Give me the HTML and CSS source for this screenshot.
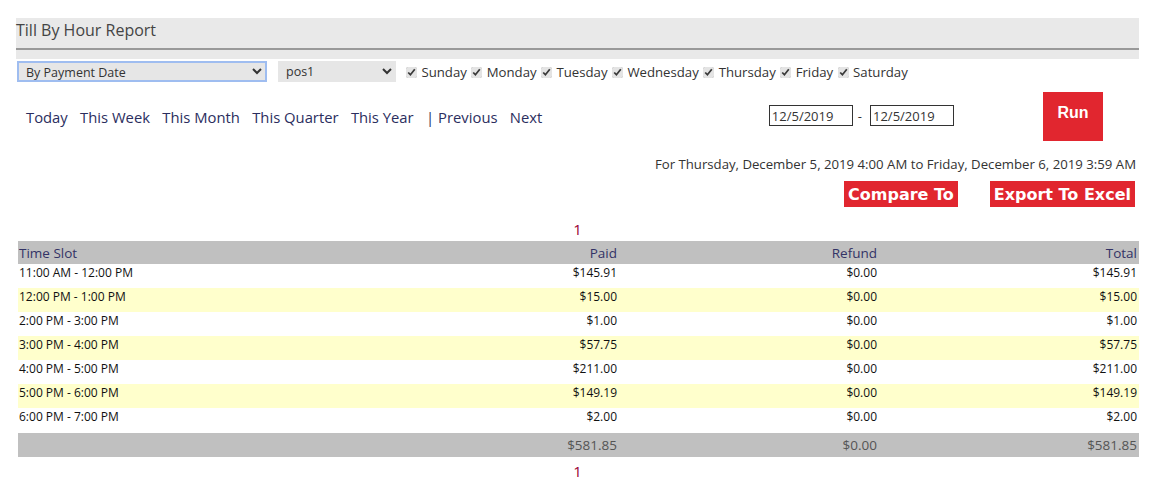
FILE: index.html
```html
<!DOCTYPE html>
<html lang="en">
<head>
  <meta charset="UTF-8">
  <title>Till By Hour Report</title>
  <link rel="stylesheet" href="styles.css">
</head>
<body>
  <div class="page">
    <div class="title-bar">
      <h1 class="title">Till By Hour Report</h1>
    </div>

    <div class="filters">
      <select class="sel sel-type">
        <option>By Payment Date</option>
      </select>
      <select class="sel sel-pos">
        <option>pos1</option>
      </select>
      <div class="days">
        <label><input type="checkbox" checked> Sunday</label>
        <label><input type="checkbox" checked> Monday</label>
        <label><input type="checkbox" checked> Tuesday</label>
        <label><input type="checkbox" checked> Wednesday</label>
        <label><input type="checkbox" checked> Thursday</label>
        <label><input type="checkbox" checked> Friday</label>
        <label><input type="checkbox" checked> Saturday</label>
      </div>
    </div>

    <div class="range-row">
      <div class="quick-links">
        <a href="#">Today</a>
        <a href="#">This Week</a>
        <a href="#">This Month</a>
        <a href="#">This Quarter</a>
        <a href="#">This Year</a>
        <span class="sep">|</span><a href="#" class="prev">Previous</a>
        <a href="#">Next</a>
      </div>
      <div class="dates">
        <input type="text" class="date-input" value="12/5/2019">
        <span class="dash">-</span>
        <input type="text" class="date-input" value="12/5/2019">
      </div>
      <button class="run-btn">Run</button>
    </div>

    <p class="range-text">For Thursday, December 5, 2019 4:00 AM to Friday, December 6, 2019 3:59 AM</p>

    <div class="actions">
      <button class="red-btn">Compare To</button>
      <button class="red-btn">Export To Excel</button>
    </div>

    <div class="pager">1</div>

    <table class="report">
      <thead>
        <tr>
          <th class="slot">Time Slot</th>
          <th class="num">Paid</th>
          <th class="num">Refund</th>
          <th class="num">Total</th>
        </tr>
      </thead>
      <tbody>
        <tr><td>11:00 AM - 12:00 PM</td><td class="num">$145.91</td><td class="num">$0.00</td><td class="num">$145.91</td></tr>
        <tr class="alt"><td>12:00 PM - 1:00 PM</td><td class="num">$15.00</td><td class="num">$0.00</td><td class="num">$15.00</td></tr>
        <tr><td>2:00 PM - 3:00 PM</td><td class="num">$1.00</td><td class="num">$0.00</td><td class="num">$1.00</td></tr>
        <tr class="alt"><td>3:00 PM - 4:00 PM</td><td class="num">$57.75</td><td class="num">$0.00</td><td class="num">$57.75</td></tr>
        <tr><td>4:00 PM - 5:00 PM</td><td class="num">$211.00</td><td class="num">$0.00</td><td class="num">$211.00</td></tr>
        <tr class="alt"><td>5:00 PM - 6:00 PM</td><td class="num">$149.19</td><td class="num">$0.00</td><td class="num">$149.19</td></tr>
        <tr><td>6:00 PM - 7:00 PM</td><td class="num">$2.00</td><td class="num">$0.00</td><td class="num">$2.00</td></tr>
      </tbody>
      <tfoot>
        <tr>
          <td></td>
          <td class="num">$581.85</td>
          <td class="num">$0.00</td>
          <td class="num">$581.85</td>
        </tr>
      </tfoot>
    </table>

    <div class="pager pager-bottom">1</div>
  </div>
</body>
</html>
```

FILE: styles.css
```css
body {
  margin: 0;
  font-family: "Segoe UI", "Open Sans", sans-serif;
  color: #333;
  background-color: #fff;
}
.page {
  width: 1123px;
  padding: 18px 0 0 16px;
}
.title-bar {
  background-color: #e9e9e9;
  padding-bottom: 9px;
}
.title {
  margin: 0;
  height: 30px;
  line-height: 25px;
  font-size: 16px;
  font-weight: normal;
  color: #444;
  border-bottom: 2px solid #999;
}
.filters {
  display: flex;
  align-items: center;
  margin-top: 2px;
  padding-left: 1px;
}
.sel {
  height: 21px;
  font-family: inherit;
  font-size: 12.5px;
  color: #333;
  background-color: #e6e6e6;
  border: 1px solid #e6e6e6;
  padding: 0 3px;
}
.sel-type {
  width: 250px;
  border: 2px solid #9fbdf0;
}
.sel-pos {
  width: 118px;
  margin-left: 11px;
}
.days {
  margin-left: 10px;
  font-size: 13.2px;
}
.days label {
  margin-right: 1px;
}
.days input {
  width: 11px;
  height: 11px;
  margin: 0 1px 0 0;
  accent-color: #e4e4e4;
  vertical-align: -1px;
}
.range-row {
  display: flex;
  align-items: center;
  height: 49px;
  margin-top: 10px;
}
.quick-links {
  padding-left: 10px;
  font-size: 14.8px;
  flex: 1;
}
.quick-links a {
  color: #2b2e5e;
  text-decoration: none;
  margin-right: 8.5px;
}
.quick-links .sep {
  color: #2b2e5e;
  margin-right: 4px;
}
.dates {
  display: flex;
  align-items: center;
  margin-bottom: 2px;
}
.date-input {
  width: 78px;
  height: 19px;
  padding: 0 2px;
  border: 1px solid #333;
  font-family: inherit;
  font-size: 13px;
  color: #333;
}
.dash {
  margin: 0 8px 0 5px;
  font-size: 13px;
}
.run-btn {
  margin-left: 89px;
  margin-right: 36px;
  width: 60px;
  height: 49px;
  background-color: #e1262f;
  color: #fff;
  border: none;
  font-family: "Liberation Sans", Arial, sans-serif;
  font-weight: bold;
  font-size: 16px;
  padding: 0 0 8px;
}
.range-text {
  margin: 14px 0 0;
  padding-right: 3px;
  text-align: right;
  font-size: 13.2px;
  color: #333;
}
.actions {
  display: flex;
  justify-content: flex-end;
  gap: 32px;
  margin-top: 8px;
  padding-right: 4px;
}
.red-btn {
  height: 26px;
  background-color: #e1262f;
  color: #fff;
  border: none;
  font-family: "DejaVu Sans", Verdana, sans-serif;
  font-weight: bold;
  font-size: 16px;
  padding: 0 4px;
}
.pager {
  width: 1123px;
  text-align: center;
  margin-top: 11px;
  height: 22px;
  font-size: 15px;
  color: #990033;
  line-height: 22px;
}
.report {
  width: 1121px;
  margin-top: 1px;
  margin-left: 2px;
  border-collapse: collapse;
  font-size: 12px;
}
.report th {
  background-color: #c0c0c0;
  height: 23px;
  padding: 0 2px 0 1px;
  font-weight: normal;
  font-size: 13.5px;
  color: #333366;
  text-align: left;
}
.report td {
  height: 24px;
  padding: 0 2px 0 1px;
  color: #111;
  vertical-align: top;
  line-height: 17px;
}
.report .num {
  text-align: right;
  width: 257px;
}
.report tr.alt td {
  background-color: #ffffcc;
}
.report tfoot td {
  background-color: #c0c0c0;
  color: #555;
  font-size: 13.5px;
  vertical-align: middle;
  line-height: 24px;
}
.report tfoot tr {
  border-top: 1px solid #fff;
}
.pager-bottom {
  margin-top: 3px;
}
```
